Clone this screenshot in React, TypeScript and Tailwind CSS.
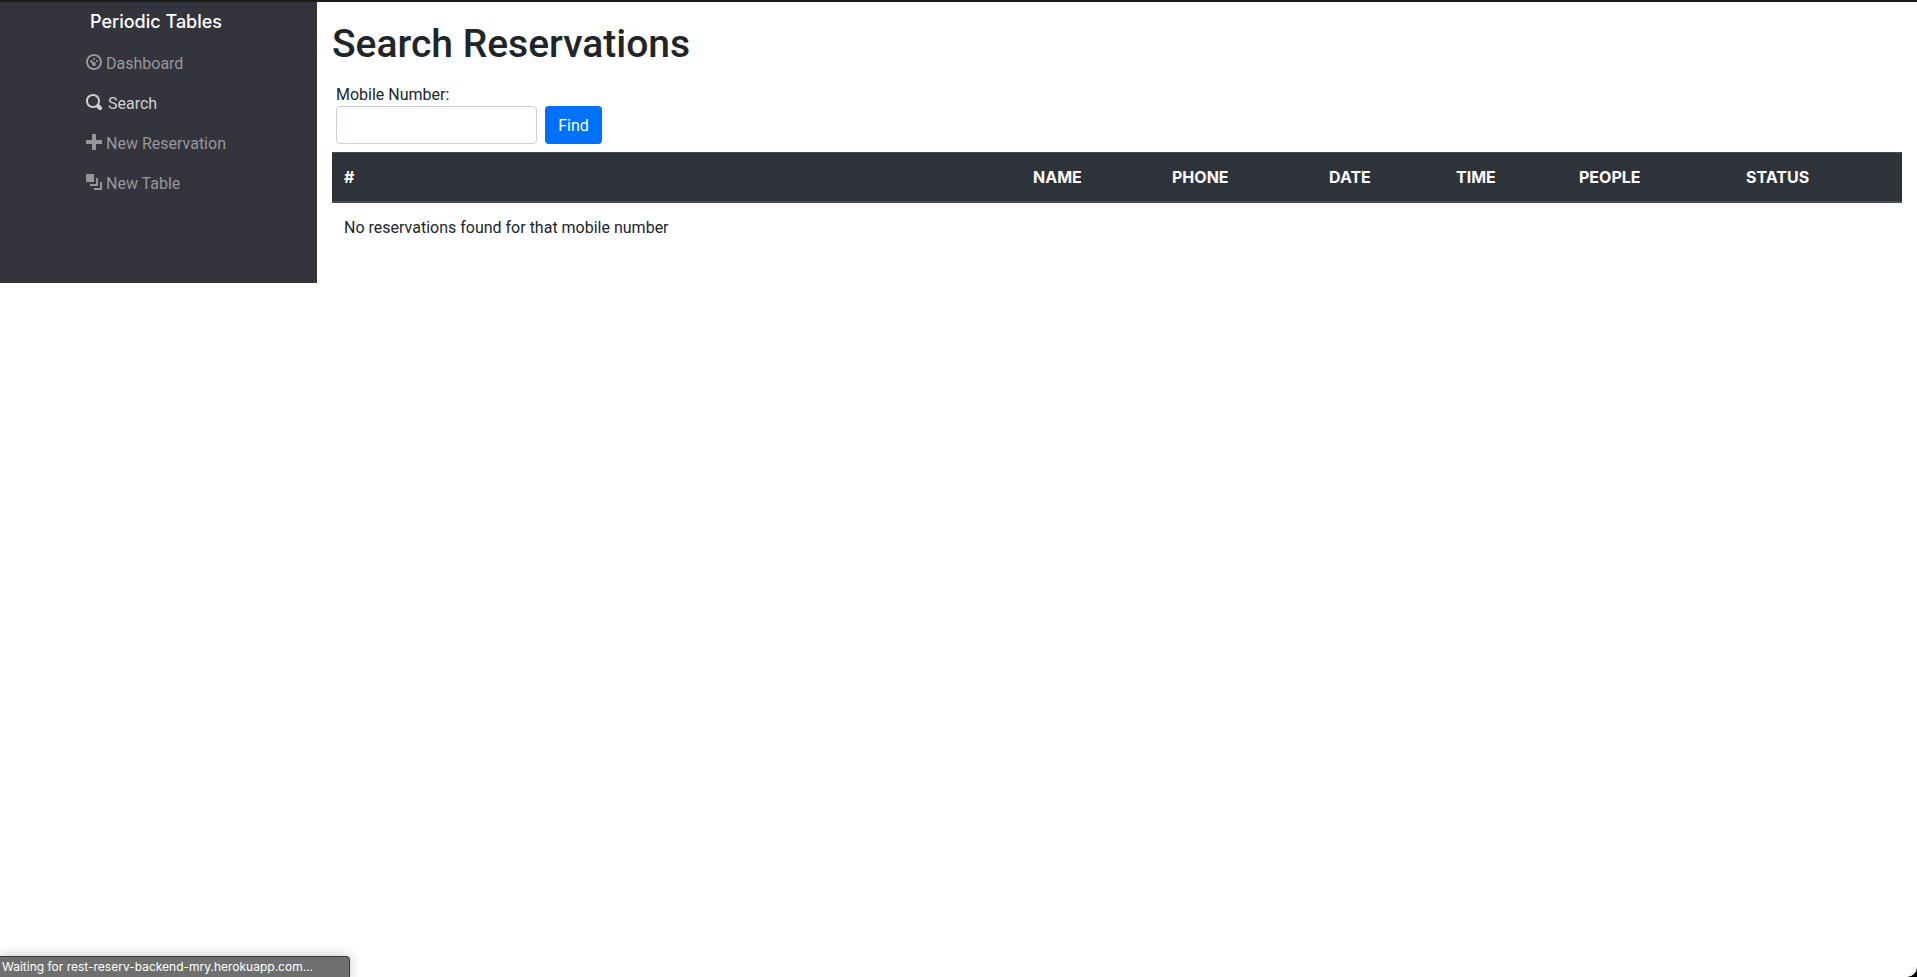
import type { ReactNode } from "react";

type NavItem = { label: string; path: string; active?: boolean };

const navItems: NavItem[] = [
  {
    label: "Dashboard",
    path: "M4 0c-2.2 0-4 1.8-4 4s1.8 4 4 4 4-1.8 4-4-1.8-4-4-4zm0 1c1.66 0 3 1.34 3 3s-1.34 3-3 3-3-1.34-3-3 1.34-3 3-3zm0 1c-.28 0-.5.22-.5.5s.22.5.5.5.5-.22.5-.5-.22-.5-.5-.5zm-1.66 1a.5.5 0 0 0-.19.84l.91.91c-.02.08-.06.16-.06.25 0 .55.45 1 1 1s1-.45 1-1-.45-1-1-1c-.09 0-.17.04-.25.06l-.91-.91a.5.5 0 0 0-.44-.16.5.5 0 0 0-.06 0zm3.16 0c-.28 0-.5.22-.5.5s.22.5.5.5.5-.22.5-.5-.22-.5-.5-.5z",
  },
  {
    label: "Search",
    path: "M3.5 0c-1.93 0-3.5 1.57-3.5 3.5s1.57 3.5 3.5 3.5c.59 0 1.17-.14 1.66-.41a1 1 0 0 0 .13.13l1 1a1.02 1.02 0 1 0 1.44-1.44l-1-1a1 1 0 0 0-.16-.13c.27-.49.44-1.06.44-1.66 0-1.93-1.55-3.5-3.5-3.5zm0 1c1.39 0 2.5 1.11 2.5 2.5 0 .66-.24 1.27-.66 1.72-.01.01-.02.02-.03.03a1 1 0 0 0-.13.13c-.44.4-1.04.63-1.69.63-1.39 0-2.5-1.11-2.5-2.5s1.11-2.5 2.5-2.5z",
    active: true,
  },
  { label: "New Reservation", path: "M3 0v3h-3v2h3v3h2v-3h3v-2h-3v-3h-2z" },
  {
    label: "New Table",
    path: "M0 0v4h4v-4h-4zm5 2v3h-3v1h4v-4h-1zm2 2v3h-3v1h4v-4h-1z",
  },
];

function Sidebar() {
  return (
    <nav className="h-[281px] w-[317px] shrink-0 bg-[#34343c] pt-1.5 pl-[86px]">
      <a href="#" className="block px-1 font-[Inter,sans-serif] text-lg leading-7 font-medium text-white">
        Periodic Tables
      </a>
      <ul className="mt-2">
        {navItems.map((item) => (
          <li key={item.label}>
            <a
              href="#"
              className={
                item.active
                  ? "flex h-10 items-center gap-1.5 text-[#d0d0d2]"
                  : "flex h-10 items-center gap-1 text-[#97979a]"
              }
            >
              <svg viewBox="0 0 8 8" className="mb-1 size-4 shrink-0" fill="currentColor" aria-hidden="true">
                <path d={item.path} />
              </svg>
              {item.label}
            </a>
          </li>
        ))}
      </ul>
    </nav>
  );
}

function Th({ children }: { children: ReactNode }) {
  return (
    <th className="border-t border-b-2 border-[#454d55] p-3 text-left font-[Inter,sans-serif] font-bold">
      {children}
    </th>
  );
}

export default function App() {
  return (
    <div className="relative min-h-screen overflow-hidden border-t-2 border-[#1c1b1c] bg-white font-[Roboto,sans-serif] text-base leading-6 text-[#212529]">
      <div className="flex items-start">
        <Sidebar />
        <main className="min-w-0 flex-1 px-[15px] pt-4">
          <h1 className="text-[39px] leading-[52px] font-medium">Search Reservations</h1>
          <form className="mt-3.5 mb-2 px-1" onSubmit={(e) => e.preventDefault()}>
            <label htmlFor="mobile" className="block leading-[22px]">
              Mobile Number:
            </label>
            <div className="flex gap-2">
              <input
                id="mobile"
                name="mobile_number"
                type="text"
                className="h-[38px] w-[201px] rounded border border-[#c8cfd6] bg-white px-3"
              />
              <button type="submit" className="h-[38px] w-[57px] rounded bg-[#0071fc] pt-0.5 text-white">
                Find
              </button>
            </div>
          </form>
          <table className="w-full table-fixed border-separate border-spacing-0">
            <colgroup>
              <col />
              <col className="w-[139px]" />
              <col className="w-[157px]" />
              <col className="w-[127px]" />
              <col className="w-[123px]" />
              <col className="w-[167px]" />
              <col className="w-[168px]" />
            </colgroup>
            <thead className="bg-[#2e3239] text-white">
              <tr>
                <Th>#</Th>
                <Th>NAME</Th>
                <Th>PHONE</Th>
                <Th>DATE</Th>
                <Th>TIME</Th>
                <Th>PEOPLE</Th>
                <Th>STATUS</Th>
              </tr>
            </thead>
            <tbody>
              <tr>
                <td colSpan={7} className="p-3 leading-[26px]">
                  No reservations found for that mobile number
                </td>
              </tr>
            </tbody>
          </table>
        </main>
      </div>
      <div className="absolute bottom-0 left-0 h-[21px] w-[350px] rounded-tr border-t border-r border-[#3c3c3c] bg-[#6f6f6f] pl-0.5 font-[Inter,sans-serif] text-xs leading-5 text-white shadow-[0_0_12px_rgba(0,0,0,0.25)]">
        Waiting for rest-reserv-backend-mry.herokuapp.com...
      </div>
      <svg viewBox="0 0 10 10" className="absolute right-0 bottom-0 size-2.5" aria-hidden="true">
        <path d="M10 0A10 10 0 0 1 0 10H10Z" fill="#000" />
      </svg>
    </div>
  );
}
